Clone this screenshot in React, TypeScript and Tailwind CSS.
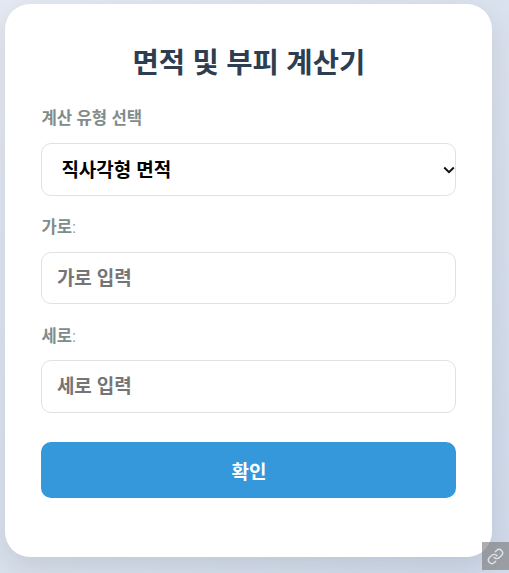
import { useState } from 'react';

const types = ['직사각형 면적', '삼각형 면적', '원 면적', '직육면체 부피'];

export default function App() {
    const [type, setType] = useState(types[0]);
    const [width, setWidth] = useState('');
    const [height, setHeight] = useState('');

    const handleSubmit = (e: React.FormEvent) => {
        e.preventDefault();
    };

    return (
        <div className="h-[573px] overflow-hidden bg-linear-135 from-[#e4e9f2] to-[#d0daea] pt-1 pl-[5.4px] font-['Noto_Sans','Noto_Sans_CJK_KR',sans-serif]">
            <div className="h-[553px] w-[487px] rounded-[25px] bg-white px-9 pt-[36px] shadow-[0_10px_30px_rgba(0,0,0,0.1)]">
                <h1 className="h-[44px] text-center text-[28.6px] leading-[44px] font-bold text-[#2c3e50]">면적 및 부피 계산기</h1>
                <form className="mt-[22px]" onSubmit={handleSubmit}>
                    <label htmlFor="type" className="block h-[24px] text-[16.7px] leading-[24px] font-bold text-[#7f8c8d]">
                        계산 유형 선택
                    </label>
                    <div className="relative mt-[13px]">
                        <select
                            id="type"
                            value={type}
                            onChange={(e) => setType(e.target.value)}
                            className="block h-[53px] w-full appearance-none rounded-[10px] border border-[#dfe1e2] bg-white pt-px pl-[19px] text-[19px] font-bold text-black outline-none"
                        >
                            {types.map((t) => (
                                <option key={t}>{t}</option>
                            ))}
                        </select>
                        <svg className="pointer-events-none absolute top-[23px] right-px" width="12" height="9" viewBox="0 0 12 9" fill="none" stroke="#111" strokeWidth="2">
                            <path d="M1.2 1.5L6 6.2L10.8 1.5" />
                        </svg>
                    </div>

                    <label htmlFor="width" className="mt-[19px] block h-[24px] text-[16.6px] leading-[24px] font-bold text-[#7f8c8d]">
                        가로<span className="font-light">:</span>
                    </label>
                    <input
                        id="width"
                        type="text"
                        placeholder="가로 입력"
                        value={width}
                        onChange={(e) => setWidth(e.target.value)}
                        className="mt-[13px] block h-[52px] w-full rounded-[10px] border border-[#dfe1e2] px-[14.5px] text-[19px] font-bold outline-none placeholder:text-[#757575]"
                    />

                    <label htmlFor="height" className="mt-[20px] block h-[24px] text-[16.6px] leading-[24px] font-bold text-[#7f8c8d]">
                        세로<span className="font-light">:</span>
                    </label>
                    <input
                        id="height"
                        type="text"
                        placeholder="세로 입력"
                        value={height}
                        onChange={(e) => setHeight(e.target.value)}
                        className="mt-[12px] block h-[53px] w-full rounded-[10px] border border-[#dfe1e2] px-[14.5px] pb-px text-[19px] font-bold outline-none placeholder:text-[#757575]"
                    />

                    <button
                        type="submit"
                        className="mt-[29px] block h-[56px] w-full rounded-[10px] bg-[#3498db] pt-[4px] text-[19px] font-bold text-white"
                    >
                        확인
                    </button>
                </form>
            </div>

            {/* link badge */}
            <a href="#" aria-label="link" className="absolute top-[542px] left-[482px] flex h-[28px] w-[27px] items-center justify-center bg-[#777]/60">
                <svg width="17" height="17" viewBox="0 0 24 24" fill="none" stroke="#e0e2e5" strokeWidth="2" strokeLinecap="round" strokeLinejoin="round">
                    <path d="M10 13a5 5 0 0 0 7.54.54l3-3a5 5 0 0 0-7.07-7.07l-1.72 1.71" />
                    <path d="M14 11a5 5 0 0 0-7.54-.54l-3 3a5 5 0 0 0 7.07 7.07l1.71-1.71" />
                </svg>
            </a>
        </div>
    );
}
